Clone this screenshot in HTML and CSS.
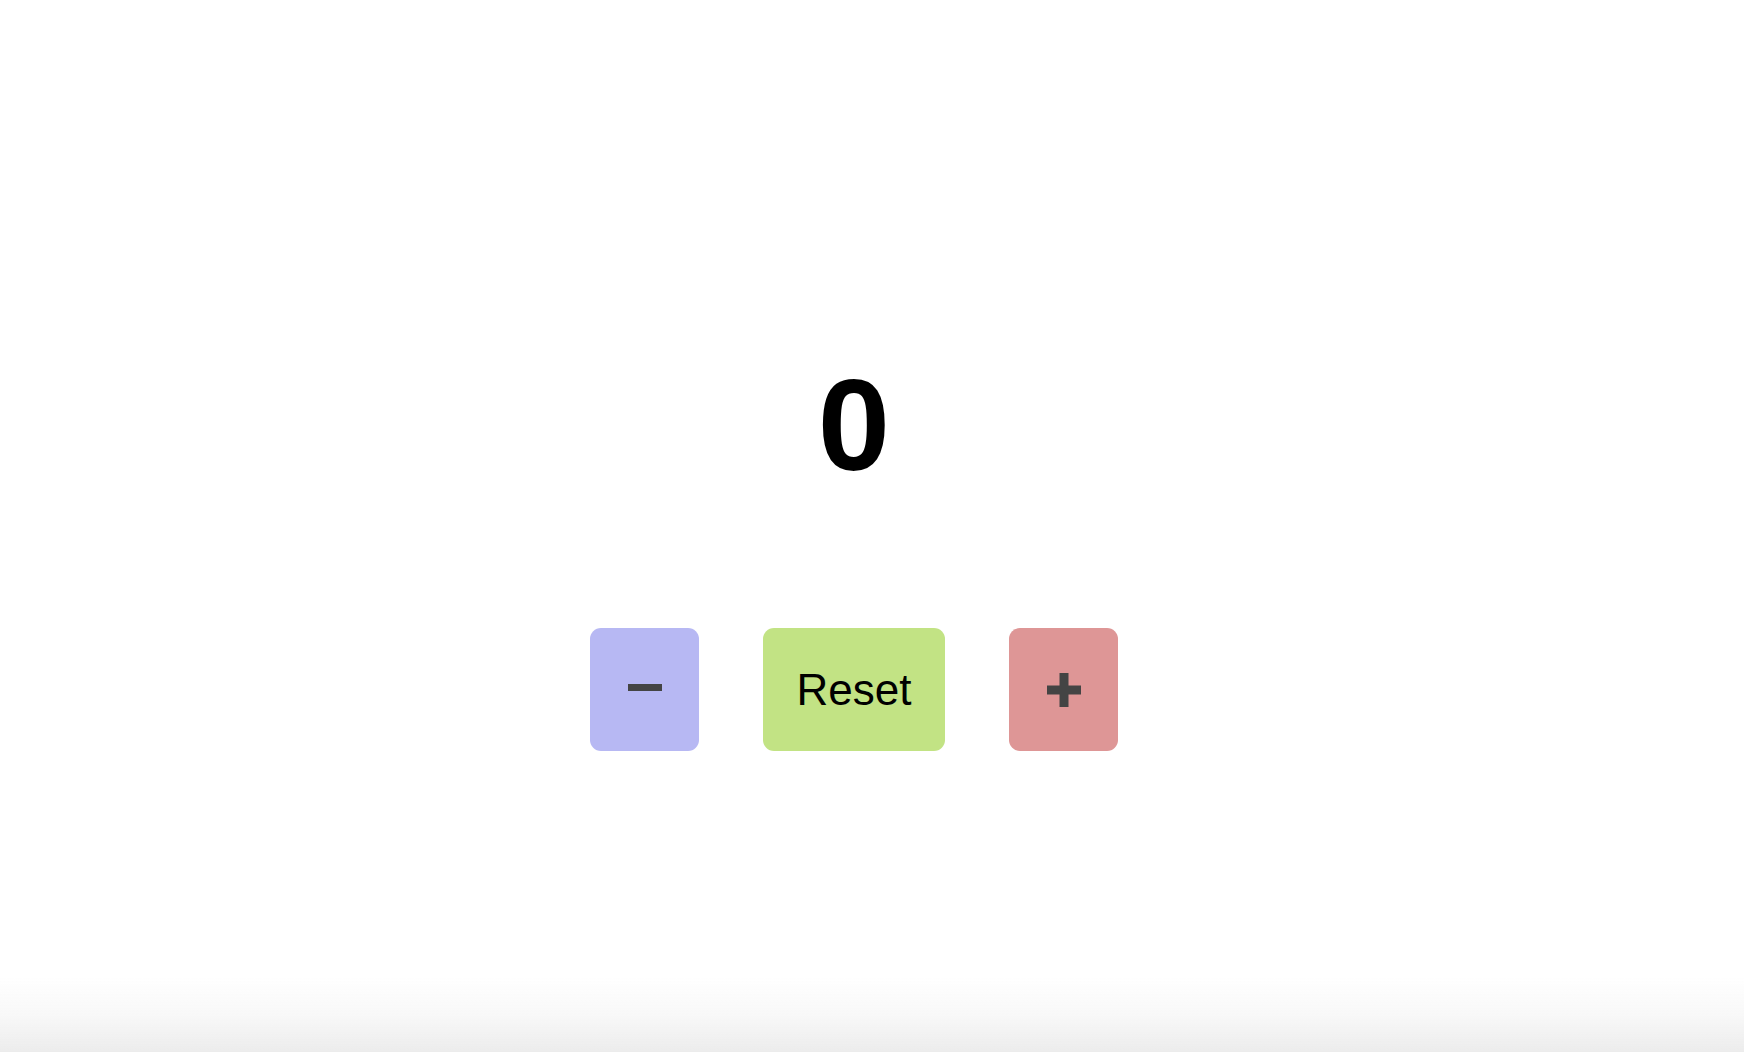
FILE: index.html
```html
<!DOCTYPE html>
<html>
<head>
<meta charset="utf-8">
<link rel="stylesheet" href="styles.css">
</head>
<body>
<main class="app">
  <div class="count">0</div>
  <div class="controls">
    <button class="btn btn-minus" aria-label="decrement">
      <svg width="34" height="34" viewBox="0 0 34 34"><rect x="0" y="13" width="34" height="7" fill="#444"/></svg>
    </button>
    <button class="btn btn-reset">Reset</button>
    <button class="btn btn-plus" aria-label="increment">
      <svg width="34" height="34" viewBox="0 0 34 34"><rect x="0" y="12.5" width="34" height="9" fill="#444"/><rect x="12.5" y="0" width="9" height="34" fill="#444"/></svg>
    </button>
  </div>
</main>
<div class="fade"></div>
</body>
</html>
```
FILE: styles.css
```css
html, body {
  margin: 0;
  padding: 0;
  background: #ffffff;
  height: 100%;
}
body {
  font-family: "Liberation Sans", Arial, sans-serif;
  overflow: hidden;
}
.app {
  width: 1708px;
  display: flex;
  flex-direction: column;
  align-items: center;
  padding-top: 360px;
}
.count {
  font-size: 130px;
  font-weight: 700;
  line-height: 1;
  color: #000;
}
.controls {
  margin-top: 138px;
  display: flex;
  gap: 64px;
}
.btn {
  height: 123px;
  border: none;
  border-radius: 11px;
  display: flex;
  align-items: center;
  justify-content: center;
  padding: 0;
  font-family: "Liberation Sans", Arial, sans-serif;
}
.btn-minus {
  width: 109px;
  background: #b7b8f3;
}
.btn-minus svg {
  margin-top: -4px;
}
.btn-reset {
  width: 182px;
  background: #c2e384;
  font-size: 44px;
  color: #000;
}
.btn-plus {
  width: 109px;
  background: #de9696;
}
.fade {
  position: fixed;
  left: 0;
  right: 0;
  bottom: 0;
  height: 75px;
  background: linear-gradient(to bottom, rgba(236,236,236,0) 0%, rgba(236,236,236,0.35) 50%, rgba(236,236,236,1) 100%);
  pointer-events: none;
}
```
